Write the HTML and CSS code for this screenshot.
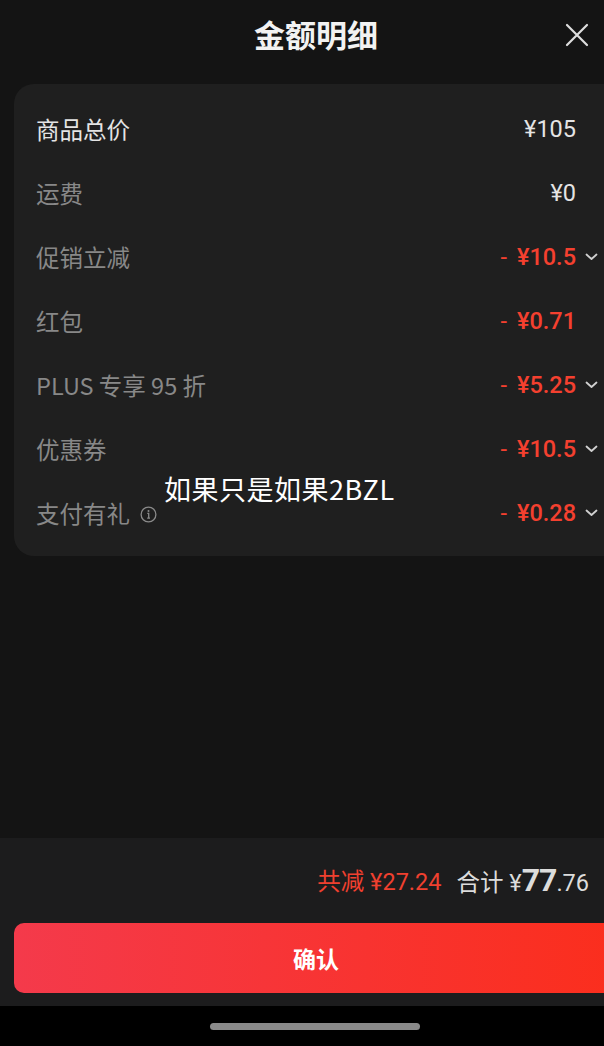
FILE: index.html
```html
<!DOCTYPE html>
<html lang="zh-CN">
<head>
    <meta charset="utf-8">
    <title>金额明细</title>
    <link rel="stylesheet" href="styles.css">
</head>
<body>
    <div class="sheet">
        <header class="sheet-header">
            <h1>金额明细</h1>
            <button class="close" aria-label="关闭">
                <svg width="24" height="24" viewBox="0 0 24 24"><path d="M2 2L22 22M22 2L2 22" stroke="#dedede" stroke-width="2.2" stroke-linecap="round"/></svg>
            </button>
        </header>

        <main class="content">
            <section class="detail-card">
                <div class="row main">
                    <span class="label">商品总价</span>
                    <span class="amount"><span class="value">¥105</span><span class="arrow"></span></span>
                </div>
                <div class="row">
                    <span class="label">运费</span>
                    <span class="amount"><span class="value">¥0</span><span class="arrow"></span></span>
                </div>
                <div class="row">
                    <span class="label">促销立减</span>
                    <span class="amount"><span class="value minus"><i>-</i>¥10.5</span><span class="arrow"><svg width="13" height="8" viewBox="0 0 13 8"><path d="M1.5 1.5L6.5 6L11.5 1.5" fill="none" stroke="#d0d0d0" stroke-width="1.8" stroke-linecap="round" stroke-linejoin="round"/></svg></span></span>
                </div>
                <div class="row">
                    <span class="label">红包</span>
                    <span class="amount"><span class="value minus"><i>-</i>¥0.71</span><span class="arrow"></span></span>
                </div>
                <div class="row">
                    <span class="label">PLUS 专享 95 折</span>
                    <span class="amount"><span class="value minus"><i>-</i>¥5.25</span><span class="arrow"><svg width="13" height="8" viewBox="0 0 13 8"><path d="M1.5 1.5L6.5 6L11.5 1.5" fill="none" stroke="#d0d0d0" stroke-width="1.8" stroke-linecap="round" stroke-linejoin="round"/></svg></span></span>
                </div>
                <div class="row">
                    <span class="label">优惠券</span>
                    <span class="amount"><span class="value minus"><i>-</i>¥10.5</span><span class="arrow"><svg width="13" height="8" viewBox="0 0 13 8"><path d="M1.5 1.5L6.5 6L11.5 1.5" fill="none" stroke="#d0d0d0" stroke-width="1.8" stroke-linecap="round" stroke-linejoin="round"/></svg></span></span>
                </div>
                <div class="row">
                    <span class="label">支付有礼
                        <svg class="info" width="17" height="17" viewBox="0 0 17 17"><circle cx="8.5" cy="8.5" r="7.4" fill="none" stroke="#8a8a8a" stroke-width="1.3"/><circle cx="8.5" cy="5" r="1" fill="#8a8a8a"/><path d="M7.3 7.4H8.7V12.2M7.2 12.2H10" fill="none" stroke="#8a8a8a" stroke-width="1.3"/></svg>
                    </span>
                    <span class="amount"><span class="value minus"><i>-</i>¥0.28</span><span class="arrow"><svg width="13" height="8" viewBox="0 0 13 8"><path d="M1.5 1.5L6.5 6L11.5 1.5" fill="none" stroke="#d0d0d0" stroke-width="1.8" stroke-linecap="round" stroke-linejoin="round"/></svg></span></span>
                </div>
            </section>
        </main>

        <footer class="summary">
            <div class="totals">
                <span class="saved">共减 ¥27.24</span>
                <span class="total">合计 ¥<b>77</b>.76</span>
            </div>
            <button class="confirm">确认</button>
        </footer>

        <div class="home-area"><span class="home-bar"></span></div>

        <div class="watermark">如果只是如果2BZL</div>
    </div>
</body>
</html>
```

FILE: styles.css
```css
body {
    margin: 0;
    background-color: #141414;
    font-family: Roboto, "Noto Sans CJK SC", sans-serif;
    overflow: hidden;
}
.sheet {
    position: relative;
    display: flex;
    flex-direction: column;
    width: 604px;
    height: 1046px;
    overflow: hidden;
}
.sheet-header {
    position: relative;
    height: 66px;
    padding-left: 28px;
    display: flex;
    align-items: center;
    justify-content: center;
}
.sheet-header h1 {
    margin: 0;
    font-family: "Noto Sans CJK SC", sans-serif;
    font-size: 31px;
    font-weight: 700;
    color: #f2f2f2;
}
.close {
    position: absolute;
    right: 15px;
    top: 23px;
    padding: 0;
    border: 0;
    background: none;
    line-height: 0;
}
.content {
    flex: 1;
    padding-top: 18px;
}
.detail-card {
    margin-left: 14px;
    width: 610px;
    box-sizing: border-box;
    padding: 13px 24px 11px 22px;
    background-color: #1f1f1f;
    border-radius: 20px;
}
.row {
    height: 64px;
    display: flex;
    align-items: center;
    justify-content: space-between;
}
.label {
    display: flex;
    align-items: center;
    gap: 10px;
    font-family: "Noto Sans CJK SC", sans-serif;
    font-size: 23.5px;
    color: #888888;
}
.row.main .label {
    color: #e4e4e4;
}
.amount {
    display: flex;
    align-items: center;
}
.value {
    font-size: 23.5px;
    color: #e4e4e4;
}
.value.minus {
    font-weight: 500;
    color: #f4402f;
}
.value i {
    font-style: normal;
    font-weight: 400;
    margin-right: 10px;
}
.arrow {
    width: 24px;
    padding-right: 2px;
    box-sizing: border-box;
    display: flex;
    justify-content: flex-end;
    line-height: 0;
}
.info {
    margin-top: 2px;
}
.summary {
    background-color: #1c1c1d;
    padding: 22px 0 13px 0;
}
.totals {
    height: 40px;
    display: flex;
    align-items: center;
    justify-content: flex-end;
    gap: 15px;
    padding-right: 15px;
    font-size: 23.5px;
}
.saved {
    color: #f0402f;
}
.total {
    color: #dcdcdc;
}
.total b {
    font-size: 32px;
    font-weight: 700;
    letter-spacing: -1px;
}
.confirm {
    display: block;
    margin: 23px 0 0 14px;
    width: 604px;
    height: 70px;
    border: 0;
    border-radius: 10px;
    background: linear-gradient(90deg, #f43a4b, #fb2e1d);
    color: #ffffff;
    font-family: "Noto Sans CJK SC", sans-serif;
    font-size: 23px;
    font-weight: 700;
}
.home-area {
    height: 40px;
    padding-left: 26px;
    background-color: #000;
    display: flex;
    align-items: center;
    justify-content: center;
}
.home-bar {
    width: 210px;
    height: 7px;
    border-radius: 4px;
    background-color: #8a8a8a;
}
.watermark {
    position: absolute;
    left: 164px;
    top: 469px;
    font-family: "Noto Sans CJK SC", sans-serif;
    font-size: 27px;
    letter-spacing: 0.5px;
    color: #ffffff;
}
```
